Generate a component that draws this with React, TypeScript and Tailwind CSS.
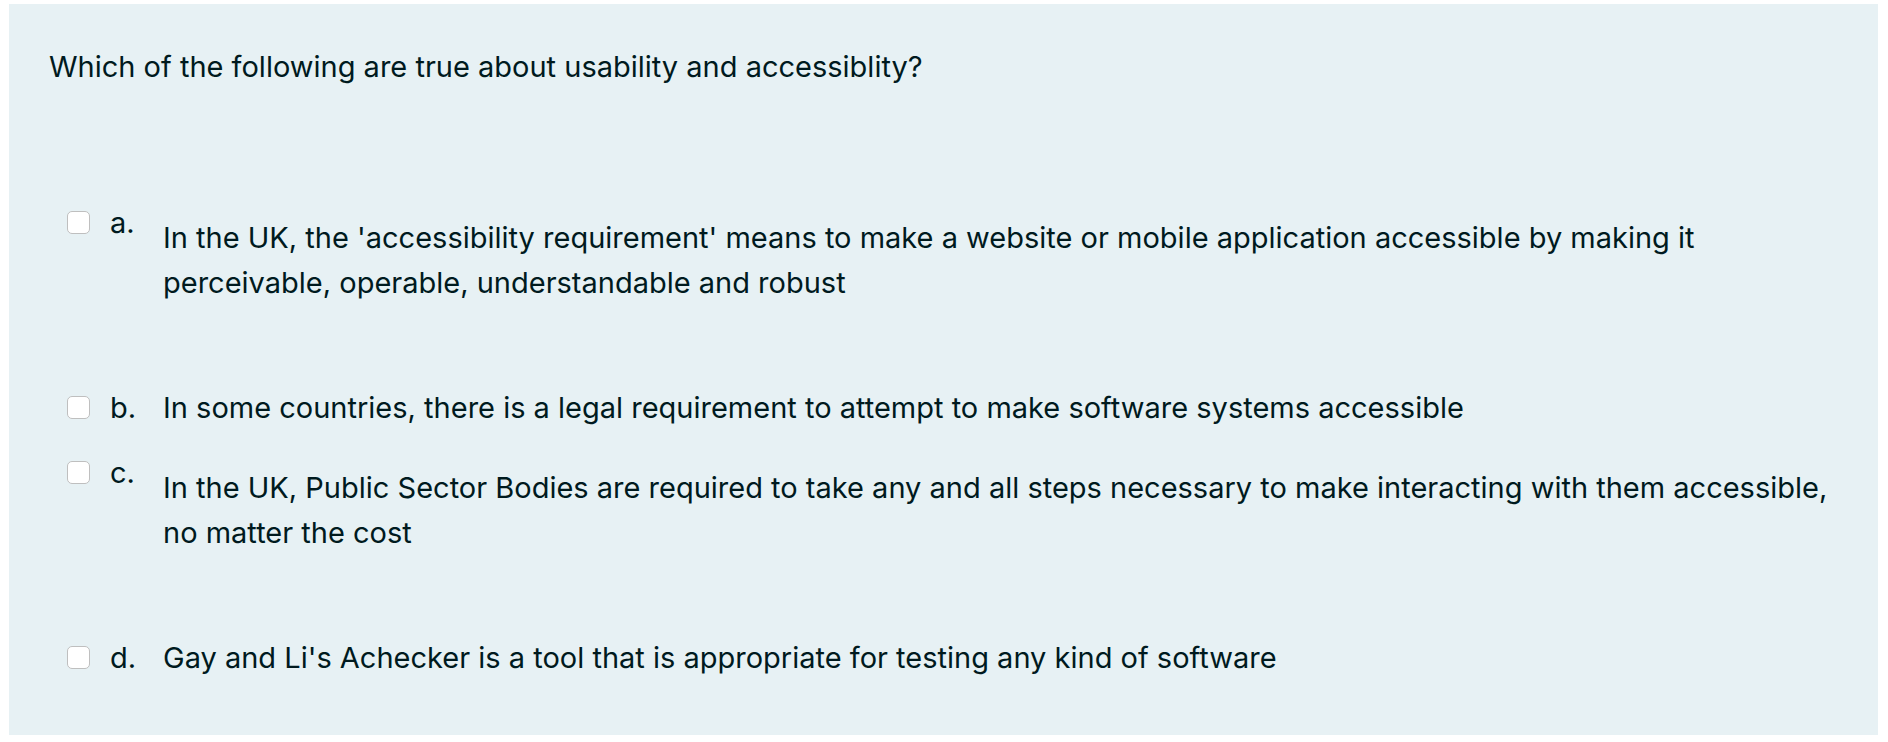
import React from "react";

type Option = {
  letter: string;
  text: string;
  multiline?: boolean;
};

const options: Option[] = [
  {
    letter: "a.",
    text: "In the UK, the 'accessibility requirement' means to make a website or mobile application accessible by making it perceivable, operable, understandable and robust",
    multiline: true,
  },
  {
    letter: "b.",
    text: "In some countries, there is a legal requirement to attempt to make software systems accessible",
  },
  {
    letter: "c.",
    text: "In the UK, Public Sector Bodies are required to take any and all steps necessary to make interacting with them accessible, no matter the cost",
    multiline: true,
  },
  {
    letter: "d.",
    text: "Gay and Li's Achecker is a tool that is appropriate for testing any kind of software",
  },
];

function Checkbox() {
  return (
    <span className="mt-[11px] block h-[23px] w-[23px] shrink-0 rounded-[5px] border border-[#bfbfbf] bg-white" />
  );
}

function AnswerRow({ option }: { option: Option }) {
  return (
    <div className="flex items-start py-[10px]">
      <Checkbox />
      <span className="ml-[20px] w-[53px] shrink-0">{option.letter}</span>
      {option.multiline ? (
        <div className="mt-[15px] mb-[60px] flex-1">{option.text}</div>
      ) : (
        <div className="flex-1">{option.text}</div>
      )}
    </div>
  );
}

export default function App() {
  return (
    <div className="min-h-[742px] bg-white pt-[4px] pl-[9px] pr-[10px]">
      <div
        className="bg-[#e7f1f4] pt-[40px] pb-[45px] pl-[40px] pr-[30px] text-[29px] leading-[45px] text-[#001a1e]"
        style={{ fontFamily: "Inter, 'Noto Sans', sans-serif" }}
      >
        <div>Which of the following are true about usability and accessiblity?</div>
        <div className="mt-[101px] pl-[18px]">
          {options.map((option) => (
            <AnswerRow key={option.letter} option={option} />
          ))}
        </div>
      </div>
    </div>
  );
}
